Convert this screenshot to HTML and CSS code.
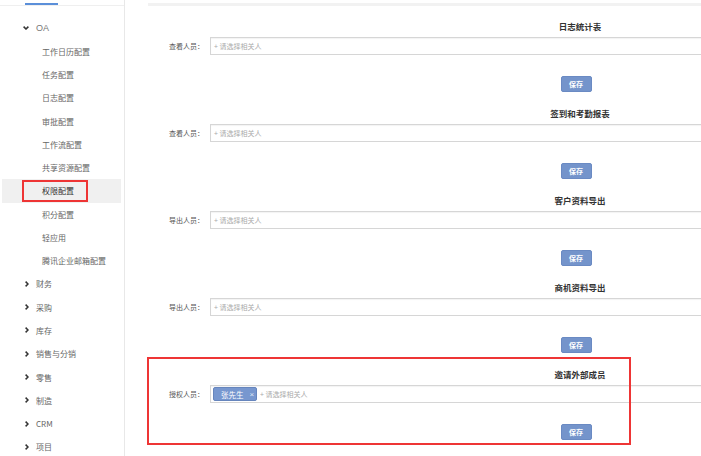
FILE: index.html
```html
<!DOCTYPE html>
<html lang="zh-CN">
<head>
<meta charset="utf-8">
<title>权限配置</title>
<link rel="stylesheet" href="styles.css">
</head>
<body>
<div class="app">
  <aside class="sidebar">
    <div class="tabs"><span class="tab-active"></span></div>
    <ul class="menu">
      <li class="group open"><svg class="chev" viewBox="0 0 6 4" width="6" height="4"><path d="M0.6 0.6 L3 3 L5.4 0.6" /></svg><span>OA</span></li>
      <li class="sub">工作日历配置</li>
      <li class="sub">任务配置</li>
      <li class="sub">日志配置</li>
      <li class="sub">审批配置</li>
      <li class="sub">工作流配置</li>
      <li class="sub">共享资源配置</li>
      <li class="sub active">权限配置<span class="mark mark-side"></span></li>
      <li class="sub">积分配置</li>
      <li class="sub">轻应用</li>
      <li class="sub">腾讯企业邮箱配置</li>
      <li class="group"><svg class="chev" viewBox="0 0 4 6" width="4" height="6"><path d="M0.6 0.6 L3 3 L0.6 5.4" /></svg><span>财务</span></li>
      <li class="group"><svg class="chev" viewBox="0 0 4 6" width="4" height="6"><path d="M0.6 0.6 L3 3 L0.6 5.4" /></svg><span>采购</span></li>
      <li class="group"><svg class="chev" viewBox="0 0 4 6" width="4" height="6"><path d="M0.6 0.6 L3 3 L0.6 5.4" /></svg><span>库存</span></li>
      <li class="group"><svg class="chev" viewBox="0 0 4 6" width="4" height="6"><path d="M0.6 0.6 L3 3 L0.6 5.4" /></svg><span>销售与分销</span></li>
      <li class="group"><svg class="chev" viewBox="0 0 4 6" width="4" height="6"><path d="M0.6 0.6 L3 3 L0.6 5.4" /></svg><span>零售</span></li>
      <li class="group"><svg class="chev" viewBox="0 0 4 6" width="4" height="6"><path d="M0.6 0.6 L3 3 L0.6 5.4" /></svg><span>制造</span></li>
      <li class="group"><svg class="chev" viewBox="0 0 4 6" width="4" height="6"><path d="M0.6 0.6 L3 3 L0.6 5.4" /></svg><span>CRM</span></li>
      <li class="group"><svg class="chev" viewBox="0 0 4 6" width="4" height="6"><path d="M0.6 0.6 L3 3 L0.6 5.4" /></svg><span>项目</span></li>
    </ul>
  </aside>
  <main class="main">
    <div class="panel">
      <section class="block">
        <div class="block-title">日志统计表</div>
        <div class="field">
          <label class="field-label">查看人员：</label>
          <div class="field-input"><span class="ph">+ 请选择相关人</span></div>
        </div>
        <div class="actions"><button class="btn">保存</button></div>
      </section>
      <section class="block">
        <div class="block-title">签到和考勤报表</div>
        <div class="field">
          <label class="field-label">查看人员：</label>
          <div class="field-input"><span class="ph">+ 请选择相关人</span></div>
        </div>
        <div class="actions"><button class="btn">保存</button></div>
      </section>
      <section class="block">
        <div class="block-title">客户资料导出</div>
        <div class="field">
          <label class="field-label">导出人员：</label>
          <div class="field-input"><span class="ph">+ 请选择相关人</span></div>
        </div>
        <div class="actions"><button class="btn">保存</button></div>
      </section>
      <section class="block">
        <div class="block-title">商机资料导出</div>
        <div class="field">
          <label class="field-label">导出人员：</label>
          <div class="field-input"><span class="ph">+ 请选择相关人</span></div>
        </div>
        <div class="actions"><button class="btn">保存</button></div>
      </section>
      <section class="block marked">
        <div class="block-title">邀请外部成员</div>
        <div class="field">
          <label class="field-label">授权人员：</label>
          <div class="field-input"><span class="tag">张先生<span class="tag-x">×</span></span><span class="ph">+ 请选择相关人</span></div>
        </div>
        <div class="actions"><button class="btn">保存</button></div>
        <span class="mark mark-main"></span>
      </section>
    </div>
  </main>
</div>
</body>
</html>
```

FILE: styles.css
```css
* { box-sizing: border-box; }

html, body {
  margin: 0;
  padding: 0;
  background: #fff;
}

body {
  width: 701px;
  height: 456px;
  overflow: hidden;
  font-family: "Noto Sans CJK SC", "Microsoft YaHei", sans-serif;
  color: #666;
}

.app {
  display: flex;
  height: 456px;
}

/* ---------- sidebar ---------- */
.sidebar {
  flex: none;
  width: 125px;
  border-right: 1px solid #e8e8e8;
  padding-top: 3px;
}

.tabs {
  height: 3px;
  padding-left: 25px;
  border-bottom: 1px solid #efefef;
}

.tab-active {
  display: block;
  width: 33px;
  height: 2px;
  background: #5b8fd9;
}

.menu {
  list-style: none;
  margin: 10.4px 0 0;
  padding: 0;
}

.menu li {
  position: relative;
  display: flex;
  align-items: center;
  height: 23.28px;
  font-size: 8px;
  color: #666;
  white-space: nowrap;
}

.group {
  padding-left: 23px;
}

.group .chev {
  flex: none;
  fill: none;
  stroke: #333;
  stroke-width: 1.5;
}

.group.open .chev {
  margin-right: 7px;
}

.group:not(.open) .chev {
  margin-left: 2px;
  margin-right: 7px;
}

.group.open span {
  font-family: "Liberation Sans", "Noto Sans CJK SC", sans-serif;
  font-size: 9px;
  color: #777;
}

.group span {
  color: #666;
}

.sub {
  padding-left: 42px;
}

.sub.active {
  margin: 0 3px 0 2px;
  padding-left: 40px;
  background: #f0f0f0;
  color: #333;
}

/* annotation overlays */
.mark {
  position: absolute;
  border: 2px solid #ee3535;
  pointer-events: none;
}

.mark-side {
  left: 20px;
  top: 1px;
  width: 66px;
  height: 22px;
}

/* ---------- main ---------- */
.main {
  flex: 1;
  min-width: 0;
  overflow: hidden;
  padding: 3px 0 0 23px;
}

.panel {
  width: 864px;
  border-top: 3px solid #f2f2f2;
  padding-top: 14px;
}

.block {
  position: relative;
  margin-bottom: 15px;
}

.block-title {
  height: 12px;
  line-height: 12px;
  text-align: center;
  font-size: 8.5px;
  font-weight: bold;
  color: #333;
}

.field {
  display: flex;
  height: 18px;
  margin-top: 5px;
}

.field-label {
  flex: none;
  width: 62px;
  padding-right: 6px;
  text-align: right;
  line-height: 18px;
  font-size: 7px;
  color: #555;
}

.field-input {
  flex: 1;
  display: flex;
  align-items: center;
  padding-left: 2px;
  border: 1px solid #d6d6d6;
  box-shadow: inset 0 1px 1px rgba(0, 0, 0, 0.05);
  font-size: 7px;
}

.ph {
  color: #aaa;
  padding-left: 1px;
}

.tag {
  display: inline-flex;
  align-items: center;
  width: 44px;
  height: 14px;
  margin-right: 2px;
  padding-left: 7px;
  background: #7797cf;
  border: 1px solid #6685bd;
  border-radius: 2px;
  color: #fff;
  font-size: 7.5px;
}

.tag-x {
  margin-left: 6px;
  color: #dfe7f5;
  font-family: "Liberation Sans", sans-serif;
  font-size: 8px;
}

.actions {
  display: flex;
  justify-content: center;
  height: 16px;
  margin-top: 21px;
  padding-right: 8px;
}

.btn {
  display: block;
  width: 31px;
  height: 16px;
  padding: 0;
  background: #7494cb;
  border: 1px solid #6a8ac3;
  border-radius: 2px;
  color: #fff;
  font-family: "Noto Sans CJK SC", sans-serif;
  font-size: 7px;
  font-weight: bold;
  line-height: 14px;
}

.mark-main {
  left: -1px;
  top: -11px;
  width: 484px;
  height: 88px;
}
```
